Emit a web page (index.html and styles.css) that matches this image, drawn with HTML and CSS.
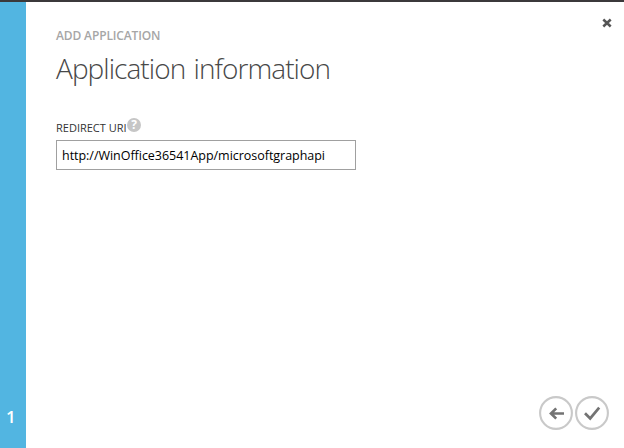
FILE: index.html
```html
<!DOCTYPE html>
<html lang="en">
<head>
<meta charset="utf-8">
<title>Add application</title>
<link rel="stylesheet" href="styles.css">
</head>
<body>
<div class="dialog">
  <aside class="steps"><span class="step">1</span></aside>
  <main class="content">
    <header class="header">
      <div>
        <p class="eyebrow">ADD APPLICATION</p>
        <h1 class="title">Application information</h1>
      </div>
      <button class="close" aria-label="Close">
        <svg width="10" height="10" viewBox="0 0 10 10"><path d="M1.3 1.5L8.7 8.5M8.7 1.5L1.3 8.5"/></svg>
      </button>
    </header>
    <div class="field">
      <div class="label-row">
        <label class="label" for="uri">REDIRECT URI</label>
        <span class="help">?</span>
      </div>
      <input class="input" id="uri" type="text" value="http://WinOffice36541App/microsoftgraphapi" spellcheck="false">
    </div>
    <footer class="actions">
      <button class="round" aria-label="Back">
        <svg width="34" height="34" viewBox="0 0 34 34"><circle cx="17" cy="17" r="15.9"/><path class="arrow" d="M25 17.5H12M17.2 12.4L12 17.5L17.2 22.6"/></svg>
      </button>
      <button class="round" aria-label="Complete">
        <svg width="34" height="34" viewBox="0 0 34 34"><circle cx="17" cy="17" r="15.9"/><path class="check" d="M10 17.2L15.2 22.4L24.2 11.6"/></svg>
      </button>
    </footer>
  </main>
</div>
</body>
</html>
```

FILE: styles.css
```css
* {
  box-sizing: border-box;
}

body {
  margin: 0;
  background: #fff;
  font-family: "Open Sans", "Noto Sans", sans-serif;
}

button {
  padding: 0;
  border: 0;
  background: none;
}

svg {
  display: block;
  fill: none;
}

.dialog {
  display: flex;
  width: 624px;
  height: 448px;
  border-top: 2px solid #3b393b;
}

.steps {
  display: flex;
  align-items: flex-end;
  width: 26px;
  padding: 0 0 21px 6px;
  background: #52b5e1;
}

.step {
  color: #fff;
  font-size: 17px;
  font-weight: 600;
  line-height: 20px;
}

.content {
  display: flex;
  flex: 1;
  flex-direction: column;
  padding: 26px 12px 18px 30px;
}

.header {
  display: flex;
  justify-content: space-between;
}

.eyebrow {
  margin: 0;
  color: #a6a6a6;
  font-size: 12px;
  font-weight: 600;
  letter-spacing: -0.13px;
  line-height: 16px;
  white-space: nowrap;
}

.title {
  margin: 4px 0 0;
  color: #484848;
  font-size: 28px;
  font-weight: 300;
  letter-spacing: -0.94px;
  word-spacing: 2px;
  line-height: 40px;
  white-space: nowrap;
}

.close {
  width: 10px;
  height: 10px;
  margin-top: -10px;
  stroke: #555;
  stroke-width: 2.5;
}

.field {
  margin-top: 30px;
}

.label-row {
  display: flex;
  align-items: flex-start;
  height: 22px;
}

.label {
  width: 71px;
  padding-top: 2px;
  color: #333;
  font-size: 11px;
  letter-spacing: 0;
  line-height: 16px;
  white-space: nowrap;
}

.help {
  width: 14px;
  height: 14px;
  border-radius: 50%;
  background: #c6c6c6;
  color: #fff;
  font-size: 12px;
  font-weight: 700;
  line-height: 14px;
  text-align: center;
}

.input {
  display: block;
  width: 300px;
  height: 30px;
  padding: 0 5px;
  border: 1px solid #a0a0a0;
  border-radius: 0;
  outline: 0;
  background: #fff;
  color: #000;
  font-family: inherit;
  font-size: 12.5px;
  letter-spacing: -0.03px;
}

.actions {
  display: flex;
  justify-content: flex-end;
  gap: 2px;
  margin-top: auto;
  padding-right: 3px;
}

.round circle {
  stroke: #c9c9c9;
  stroke-width: 2.1;
}

.arrow,
.check {
  stroke: #737373;
  stroke-width: 2.7;
}
```
